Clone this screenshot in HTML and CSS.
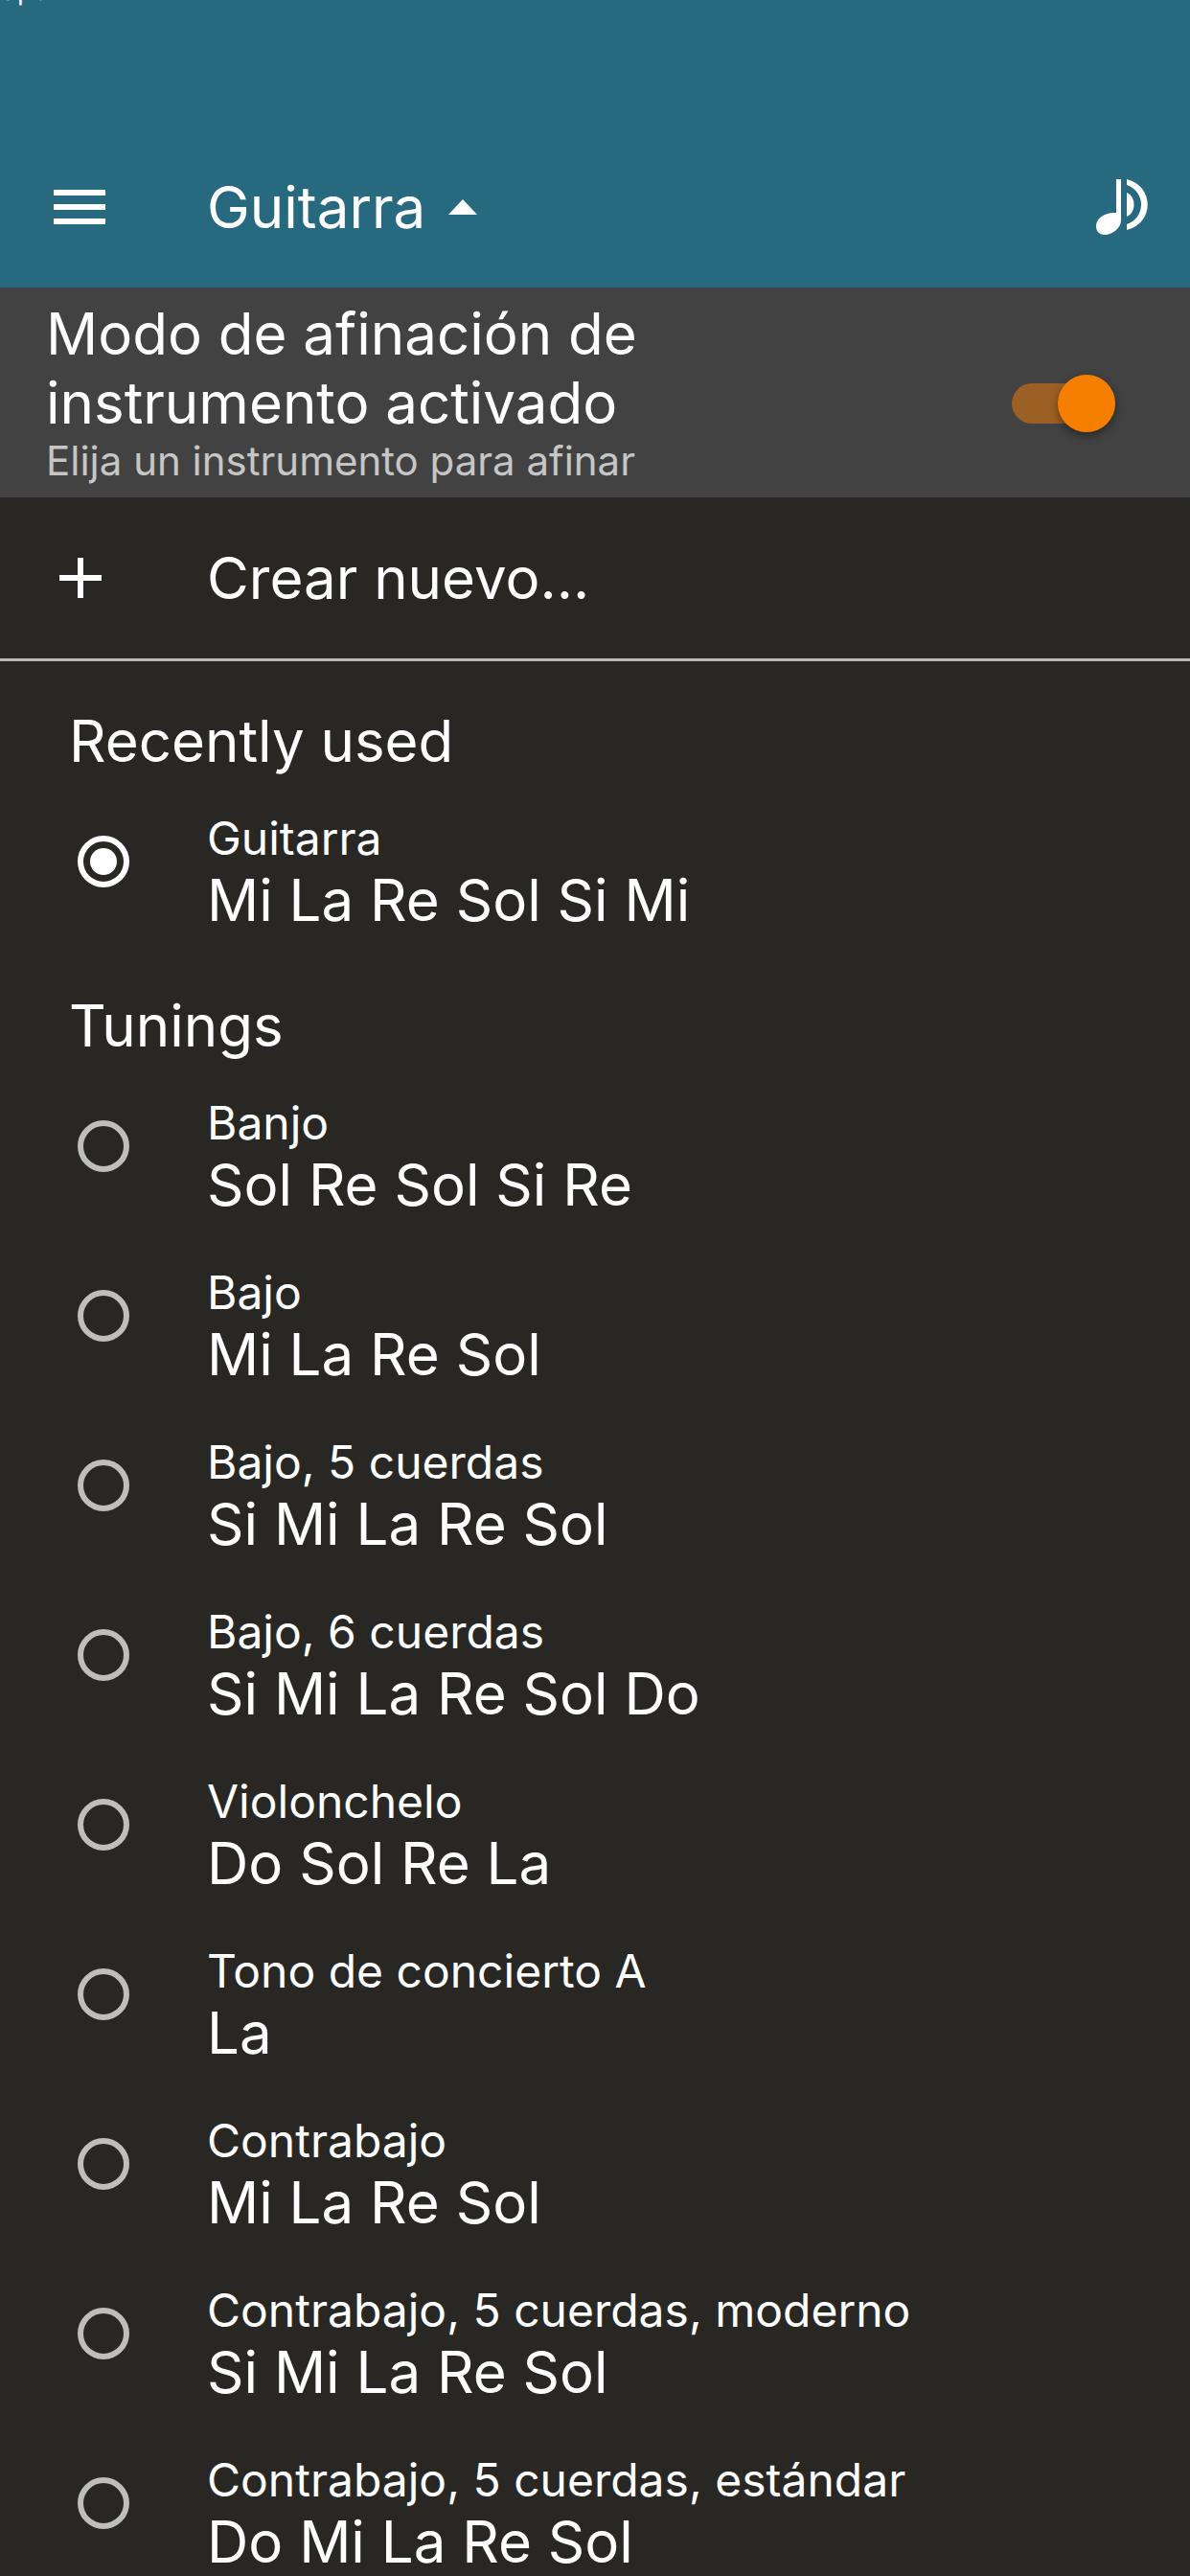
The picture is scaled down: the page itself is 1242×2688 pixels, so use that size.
FILE: index.html
```html
<!DOCTYPE html>
<html lang="es">
<head>
  <meta charset="UTF-8">
  <meta name="viewport" content="width=device-width,initial-scale=1.0">
  <title>Guitarra</title>
  <link rel="stylesheet" href="styles.css">
</head>
<body>
  <header class="top-bar">
    <div class="status"><span class="status-text">Sparks</span></div>
    <div class="toolbar">
      <button type="button" class="icon-btn menu-btn" aria-label="Menú">
        <svg width="54" height="36" viewBox="0 0 54 36"><path d="M0 0h54v6H0zM0 15h54v6H0zM0 30h54v6H0z"/></svg>
      </button>
      <button type="button" class="title-btn">
        Guitarra
        <svg width="30" height="16" viewBox="0 0 30 16"><path d="M0 16L15 0l15 16z"/></svg>
      </button>
      <button type="button" class="icon-btn tone-btn" aria-label="Tono">
        <svg width="54" height="58" viewBox="0 0 54 58">
          <path d="M21 0h5v43c0 8-9 15-17 15-5 0-9-3-9-9 0-8 9-15 21-14z"/>
          <path d="M32 14c10 4 10 21 0 25z"/>
          <path d="M32 0c29 7 29 46 0 53v-6c20-7 20-34 0-41z"/>
        </svg>
      </button>
    </div>
  </header>

  <label class="mode">
    <span class="mode-text">
      <span class="mode-title">Modo de afinación de instrumento activado</span>
      <span class="mode-sub">Elija un instrumento para afinar</span>
    </span>
    <input type="checkbox" class="switch" role="switch" checked>
  </label>

  <button type="button" class="create">
    <svg width="44" height="42" viewBox="0 0 44 42"><path d="M19 0h6v18h19v6H25v18h-6V24H0v-6h19z"/></svg>
    <span>Crear nuevo...</span>
  </button>

  <main>
    <section>
      <h2>Recently used</h2>
      <label class="tuning"><input type="radio" name="tuning" checked><span class="tuning-text"><span class="name">Guitarra</span><span class="notes">Mi La Re Sol Si Mi</span></span></label>
    </section>
    <section>
      <h2>Tunings</h2>
      <label class="tuning"><input type="radio" name="tuning"><span class="tuning-text"><span class="name">Banjo</span><span class="notes">Sol Re Sol Si Re</span></span></label>
      <label class="tuning"><input type="radio" name="tuning"><span class="tuning-text"><span class="name">Bajo</span><span class="notes">Mi La Re Sol</span></span></label>
      <label class="tuning"><input type="radio" name="tuning"><span class="tuning-text"><span class="name">Bajo, 5 cuerdas</span><span class="notes">Si Mi La Re Sol</span></span></label>
      <label class="tuning"><input type="radio" name="tuning"><span class="tuning-text"><span class="name">Bajo, 6 cuerdas</span><span class="notes">Si Mi La Re Sol Do</span></span></label>
      <label class="tuning"><input type="radio" name="tuning"><span class="tuning-text"><span class="name">Violonchelo</span><span class="notes">Do Sol Re La</span></span></label>
      <label class="tuning"><input type="radio" name="tuning"><span class="tuning-text"><span class="name">Tono de concierto A</span><span class="notes">La</span></span></label>
      <label class="tuning"><input type="radio" name="tuning"><span class="tuning-text"><span class="name">Contrabajo</span><span class="notes">Mi La Re Sol</span></span></label>
      <label class="tuning"><input type="radio" name="tuning"><span class="tuning-text"><span class="name">Contrabajo, 5 cuerdas, moderno</span><span class="notes">Si Mi La Re Sol</span></span></label>
      <label class="tuning"><input type="radio" name="tuning"><span class="tuning-text"><span class="name">Contrabajo, 5 cuerdas, estándar</span><span class="notes">Do Mi La Re Sol</span></span></label>
    </section>
  </main>
</body>
</html>
```

FILE: styles.css
```css
:root {
  --bar: #27697f;
  --panel: #424242;
  --bg: #282724;
  --accent: #f77f00;
  --text: #fff;
  --text-sub: #c6c6c6;
  --ring: #bebebc;
}
* { box-sizing: border-box; }
html { overflow-x: hidden; scrollbar-width: none; }
body {
  margin: 0;
  background: var(--bg);
  color: var(--text);
  font-family: Inter, "Liberation Sans", sans-serif;
  font-size: 60px;
  line-height: 72px;
}
button {
  border: none;
  padding: 0;
  background: none;
  color: inherit;
  font: inherit;
  cursor: pointer;
}
svg { display: block; fill: currentColor; }

/* top bar */
.top-bar { background: var(--bar); }
.status {
  height: 132px;
  overflow: hidden;
}
.status-text {
  display: block;
  margin-top: -20px;
  font-size: 28px;
  line-height: 20px;
}
.toolbar {
  display: flex;
  align-items: center;
  height: 168px;
  padding: 0 44px 0 56px;
}
.menu-btn { width: 160px; }
.title-btn {
  display: flex;
  align-items: center;
  gap: 24px;
}
.tone-btn { margin-left: auto; }

/* tuning mode */
.mode {
  display: flex;
  align-items: center;
  justify-content: space-between;
  padding: 12px 78px 14px 48px;
  background: var(--panel);
}
.mode-text { max-width: 720px; }
.mode-title, .mode-sub { display: block; }
.mode-sub {
  color: var(--text-sub);
  font-size: 42px;
  line-height: 49px;
}
.switch {
  appearance: none;
  flex: none;
  display: flex;
  align-items: center;
  justify-content: flex-end;
  width: 108px;
  height: 42px;
  margin: 24px 0 0;
  border-radius: 21px;
  background: #9c6024;
}
.switch::before {
  content: "";
  flex: none;
  width: 60px;
  height: 60px;
  border-radius: 50%;
  background: var(--accent);
  box-shadow: 0 4px 10px #0006;
}
.switch:not(:checked) { justify-content: flex-start; }

.create {
  display: flex;
  align-items: center;
  width: 100%;
  height: 171px;
  padding: 0 62px;
  gap: 110px;
  border-bottom: 3px solid #b8bab9;
}

/* tunings list */
main { padding-top: 11px; }
section { padding-top: 36px; }
h2 {
  margin: 0 0 12px;
  padding: 0 72px;
  font-size: 60px;
  font-weight: 400;
}
.tuning {
  display: flex;
  align-items: flex-start;
  gap: 81px;
  padding: 25px 81px 23px;
}
.tuning input {
  appearance: none;
  flex: none;
  display: grid;
  place-items: center;
  width: 54px;
  height: 54px;
  margin: 26px 0 0;
  border: 6px solid var(--ring);
  border-radius: 50%;
}
.tuning input:checked { border-color: var(--text); }
.tuning input:checked::before {
  content: "";
  width: 28px;
  height: 28px;
  border-radius: 50%;
  background: var(--text);
}
.name, .notes { display: block; }
.name {
  font-size: 48px;
  line-height: 57px;
}
```
